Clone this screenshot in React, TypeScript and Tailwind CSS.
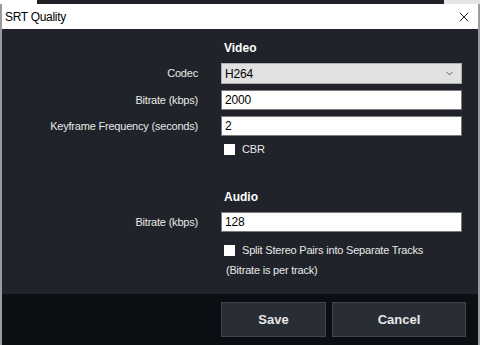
import { X, ChevronDown } from 'lucide-react';

const font = { fontFamily: '"Segoe UI", "Liberation Sans", Arial, sans-serif' };

function Label({ children }: { children: React.ReactNode }) {
    return <div className="w-[197px] text-right text-[11px] tracking-[-0.2px] text-[#e8e8e8] leading-none pr-[1px]">{children}</div>;
}

function TextBox({ value }: { value: string }) {
    return (
        <div className="w-[241px] h-[20px] bg-white border border-[#7a7a7a] flex items-center px-[3px] text-[12px] tracking-[-0.2px] text-black leading-none">
            {value}
        </div>
    );
}

function Check({ text }: { text: string }) {
    return (
        <div className="flex items-center gap-[7px] ml-[222px]">
            <span className="w-[11px] h-[11px] bg-white block"></span>
            <span className="text-[11px] tracking-[-0.2px] text-[#e8e8e8] leading-none">{text}</span>
        </div>
    );
}

export default function App() {
    return (
        <div className="w-[480px] h-[345px] flex flex-col bg-[#20242a] overflow-hidden" style={font}>
            {/* strip of window behind */}
            <div className="flex h-[4px] shrink-0">
                <div className="w-[37px] bg-white"></div>
                <div className="flex-1 bg-[#1f2328]"></div>
                <div className="w-[36px] bg-[#e4e4e4]"></div>
            </div>

            <div className="flex-1 flex flex-col border-l-2 border-r-2 border-[#9b9b9b] min-h-0">
                {/* title bar */}
                <div className="h-[25px] bg-white flex items-center justify-between shrink-0">
                    <span className="text-[12px] tracking-[-0.3px] text-black pl-[3px] leading-none">SRT Quality</span>
                    <X className="w-[16px] h-[16px] mr-[6px] text-black" strokeWidth={1.3} />
                </div>

                {/* body */}
                <div className="flex-1 bg-[#20242a] flex flex-col pt-[13px]">
                    <div className="ml-[222px] text-[12px] font-bold text-white leading-none">Video</div>

                    <div className="flex items-center gap-[22px] mt-[9px]">
                        <Label>Codec</Label>
                        <div className="w-[241px] h-[21px] bg-[#e1e1e1] border border-[#adadad] flex items-center justify-between pl-[3px] pr-[6px] text-[12px] tracking-[-0.2px] text-black leading-none">
                            H264
                            <ChevronDown className="w-[11px] h-[11px] text-[#333]" strokeWidth={1.6} />
                        </div>
                    </div>

                    <div className="flex items-center gap-[22px] mt-[6px]">
                        <Label>Bitrate (kbps)</Label>
                        <TextBox value="2000" />
                    </div>

                    <div className="flex items-center gap-[22px] mt-[6px]">
                        <Label>Keyframe Frequency (seconds)</Label>
                        <TextBox value="2" />
                    </div>

                    <div className="mt-[8px]">
                        <Check text="CBR" />
                    </div>

                    <div className="ml-[222px] text-[12px] font-bold text-white leading-none mt-[36px]">Audio</div>

                    <div className="flex items-center gap-[22px] mt-[9px]">
                        <Label>Bitrate (kbps)</Label>
                        <TextBox value="128" />
                    </div>

                    <div className="mt-[13px]">
                        <Check text="Split Stereo Pairs into Separate Tracks" />
                    </div>

                    <div className="ml-[224px] text-[11px] tracking-[-0.2px] text-[#e8e8e8] leading-none mt-[9px]">(Bitrate is per track)</div>
                </div>

                {/* footer */}
                <div className="h-[51px] bg-[#0b0f13] flex items-start justify-end gap-[6px] pt-[8px] pr-[12px] shrink-0">
                    <button className="w-[105px] h-[35px] bg-[#282d36] border border-[#3f4652] text-[13px] font-bold text-[#e8e8e8]">Save</button>
                    <button className="w-[134px] h-[35px] bg-[#282d36] border border-[#3f4652] text-[13px] font-bold text-[#e8e8e8]">Cancel</button>
                </div>
            </div>
        </div>
    );
}
